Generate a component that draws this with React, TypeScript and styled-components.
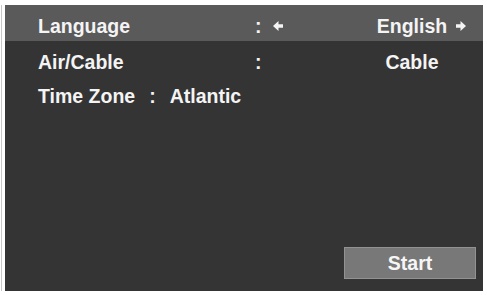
import React from "react";
import styled, { createGlobalStyle } from "styled-components";

const Global = createGlobalStyle`
  html, body { margin: 0; padding: 0; background: #ffffff; }
  body { font-family: "Liberation Sans", Arial, sans-serif; }
`;

const Page = styled.div`
  width: 487px;
  height: 295px;
  padding: 5px 4px 4px 5px;
  box-sizing: border-box;
`;

const Panel = styled.div`
  width: 478px;
  height: 286px;
  background: #343434;
  display: flex;
  flex-direction: column;
  box-shadow: -3px 0 0 #ffffff, -4px 0 0 #c8c8c8;
`;

const Row = styled.div<{ $active?: boolean }>`
  display: grid;
  grid-template-columns: 217px 15px 82px 120px;
  align-items: start;
  height: 36px;
  box-sizing: border-box;
  padding: 10px 0 0 33px;
  background: ${(p) => (p.$active ? "#5a5a5a" : "transparent")};
  color: #f4f4f4;
  font-size: 19.5px;
  font-weight: 700;
  line-height: 22px;
`;

const InlineRow = styled.div`
  display: flex;
  gap: 14px;
  height: 34px;
  box-sizing: border-box;
  padding: 8px 0 0 33px;
  color: #f4f4f4;
  font-size: 19.5px;
  font-weight: 700;
  line-height: 22px;
`;

const Cell = styled.span``;

const ArrowCell = styled.span`
  display: flex;
  align-items: center;
  height: 22px;
  padding-left: 3px;
`;

const Value = styled.span`
  text-align: center;
  white-space: nowrap;
`;

const TrailingArrow = styled.span`
  display: inline-block;
  margin-left: 9px;
  margin-right: -19px;
  vertical-align: 2px;
`;

const Spacer = styled.div`
  flex: 1;
`;

const Footer = styled.div`
  display: flex;
  justify-content: flex-end;
  padding: 0 7px 12px 0;
`;

const StartButton = styled.button`
  width: 132px;
  height: 32px;
  box-sizing: border-box;
  background: #787878;
  border: 1px solid #929292;
  color: #f6f6f6;
  font-family: "Liberation Sans", Arial, sans-serif;
  font-size: 19.5px;
  font-weight: 700;
  line-height: 22px;
  padding: 0;
`;

const Arrow = ({ dir }: { dir: "left" | "right" }) => (
  <svg width="10" height="10" viewBox="0 0 10 10" style={{ display: "block" }}>
    <path
      d={
        dir === "left"
          ? "M0 5 L5.5 0 L5.5 3.2 L10 3.2 L10 6.8 L5.5 6.8 L5.5 10 Z"
          : "M10 5 L4.5 0 L4.5 3.2 L0 3.2 L0 6.8 L4.5 6.8 L4.5 10 Z"
      }
      fill="#f4f4f4"
    />
  </svg>
);

export default function App() {
  return (
    <>
      <Global />
      <Page>
        <Panel>
          <Row $active>
            <Cell>Language</Cell>
            <Cell>:</Cell>
            <ArrowCell>
              <Arrow dir="left" />
            </ArrowCell>
            <Value>
              English
              <TrailingArrow>
                <Arrow dir="right" />
              </TrailingArrow>
            </Value>
          </Row>
          <Row>
            <Cell>Air/Cable</Cell>
            <Cell>:</Cell>
            <ArrowCell />
            <Value>Cable</Value>
          </Row>
          <InlineRow>
            <Cell>Time Zone</Cell>
            <Cell>:</Cell>
            <Cell>Atlantic</Cell>
          </InlineRow>
          <Spacer />
          <Footer>
            <StartButton>Start</StartButton>
          </Footer>
        </Panel>
      </Page>
    </>
  );
}
